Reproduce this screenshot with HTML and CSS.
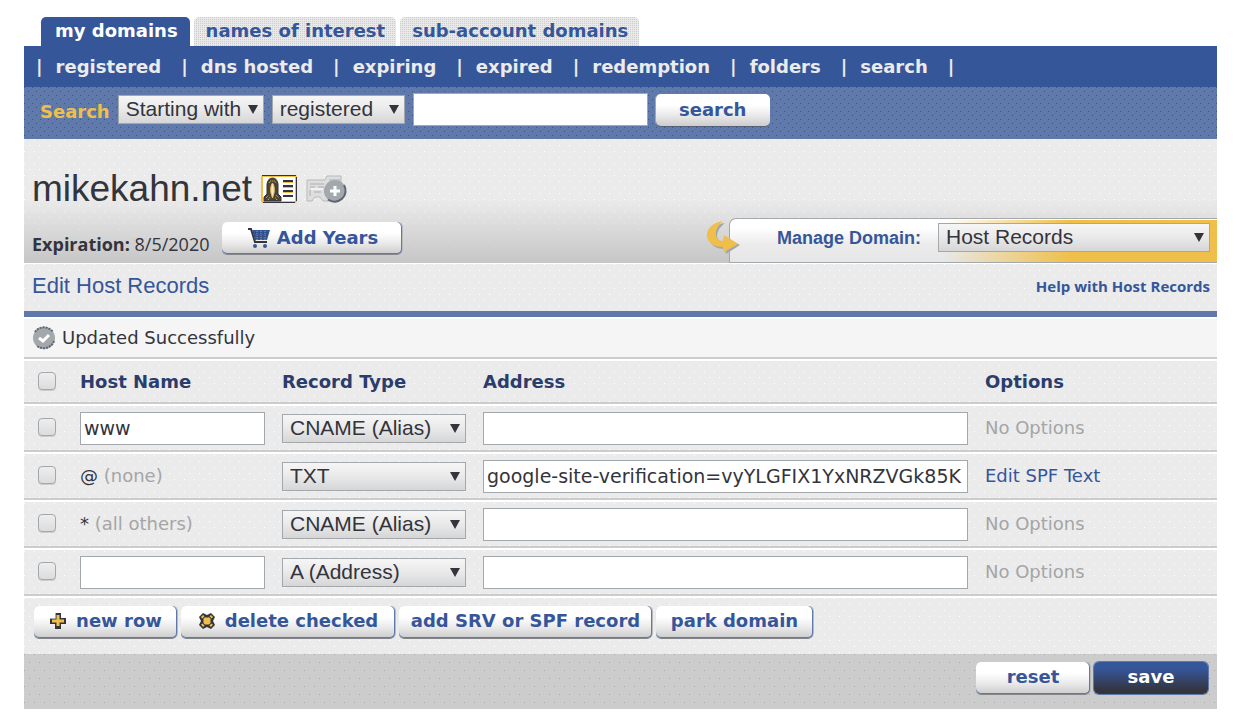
FILE: index.html
```html
<!DOCTYPE html>
<html lang="en">
<head>
<meta charset="utf-8">
<title>mikekahn.net - Edit Host Records</title>
<link rel="stylesheet" href="styles.css">
</head>
<body>
<div class="page">
  <nav class="tabs">
    <a class="tab active" href="#">my domains</a>
    <a class="tab" href="#">names of interest</a>
    <a class="tab" href="#">sub-account domains</a>
  </nav>
  <nav class="subnav">
    <span>|</span><a href="#">registered</a>
    <span>|</span><a href="#">dns hosted</a>
    <span>|</span><a href="#">expiring</a>
    <span>|</span><a href="#">expired</a>
    <span>|</span><a href="#">redemption</a>
    <span>|</span><a href="#">folders</a>
    <span>|</span><a href="#">search</a>
    <span>|</span>
  </nav>
  <form class="search">
    <label class="search-label" for="q">Search</label>
    <select class="select match" aria-label="Match"><option>Starting with</option></select>
    <select class="select scope" aria-label="Scope"><option>registered</option></select>
    <input class="field query" id="q" type="text">
    <button class="btn flat" type="button">search</button>
  </form>

  <header class="domain">
    <div class="title">
      <h1>mikekahn.net</h1>
      <svg class="card" width="36" height="28" viewBox="0 0 36 28">
        <rect x="1" y="1" width="34" height="26" rx="1" fill="#fff" stroke="#f0bf4a" stroke-width="2"/>
        <path d="M1 .5H35M2 27.5H34M35.500 2V26" stroke="#33343c" fill="none"/>
        <path d="M3 26V22L6 19V9Q7 3 11.500 3T17 9V19L20 22V26Z" fill="#4b4230" stroke="#33343c"/>
        <path d="M11.500 8C9.500 10 9.500 16 10 18L11.500 23L13 18C13.500 16 13.500 10 11.500 8Z" fill="#f4e7c5" stroke="#f0bf4a"/>
        <path d="M5 23L8 20M15 20L18 23M7 25L9 22M16 25L14 22M8 8L9 6H14L15 8" stroke="#f0bf4a" fill="none" stroke-dasharray="1 1"/>
        <path d="M22 6H32M22 11H32M22 16H32M22 21H32" stroke="#33343c" stroke-width="2"/>
        <path d="M22 7.500H32M22 12.500H32M22 17.500H32" stroke="#f0bf4a"/>
      </svg>
      <svg class="note" width="42" height="28" viewBox="0 0 42 28">
        <path d="M1 5H19L21 1H35V12H23V26H17L14 22H9L6 26H1Z" fill="#dedede" stroke="#b7b9bb"/>
        <path d="M4 9H18M4 12H9M12 12H18M4 15V21M8 17H15M23 5H34" stroke="#c4c6c8" stroke-width="2"/>
        <path d="M5 14H17" stroke="#f2f2f2" stroke-width="2"/>
        <circle cx="29" cy="16" r="11" fill="#a3a8ad"/>
        <path d="M38 10A11 11 0 0 1 22 24.500" fill="none" stroke="#5e6472" stroke-width="2"/>
        <path d="M29 11V21M24 16H34" stroke="#fff" stroke-width="3"/>
      </svg>
    </div>
    <div class="domain-bar">
      <p class="expiry"><b>Expiration:</b> 8/5/2020</p>
      <button class="btn years" type="button">
        <svg width="24" height="22" viewBox="0 0 24 22">
          <path d="M1 2H4L8 15H20" fill="none" stroke="#33343c" stroke-width="2"/>
          <path d="M5 3H23L20 13H8Z" fill="#36569a"/>
          <path d="M6 6H22M7 9H21" stroke="#33343c" stroke-dasharray="1 1"/>
          <path d="M10 4V13M14 4V13M18 4V13" stroke="#8b9cc2" stroke-dasharray="1 1"/>
          <circle cx="8" cy="19" r="2" fill="#36569a"/><circle cx="18" cy="19" r="2" fill="#36569a"/>
        </svg>Add Years</button>
      <div class="manage">
        <svg class="hook" width="34" height="36" viewBox="0 0 34 36">
          <path d="M19 4C7 5 2 13 3 20C5 27 11 30 19 30L20 35L34 26L20 18L19 23C9 23 8 13 19 4Z" fill="#a3a8ad"/>
          <path d="M17 2C5 4 0 11 1 18C3 25 9 28 17 28L18 33L32 25L18 16L17 22C8 22 7 10 17 2Z" fill="#f0bf4a"/>
        </svg>
        <label for="manage">Manage Domain:</label>
        <select class="select" id="manage"><option>Host Records</option></select>
      </div>
    </div>
  </header>

  <div class="section">
    <h2>Edit Host Records</h2>
    <a href="#">Help with Host Records</a>
  </div>
  <p class="message">
    <svg width="24" height="24" viewBox="0 0 24 24">
      <circle cx="12" cy="12" r="11" fill="#a3a8ad"/>
      <path d="M3 6A11 11 0 0 1 21 6M22 15A11 11 0 0 1 5 20" fill="none" stroke="#5e6472" stroke-width="2" stroke-dasharray="2 1"/>
      <path d="M7 12L11 15L17 9" fill="none" stroke="#fff" stroke-width="3"/>
    </svg>Updated Successfully</p>

  <form>
    <table class="records">
      <colgroup><col class="c-check"><col class="c-host"><col class="c-type"><col><col class="c-options"></colgroup>
      <thead>
        <tr><th><input type="checkbox" aria-label="Check all"></th><th>Host Name</th><th>Record Type</th><th>Address</th><th>Options</th></tr>
      </thead>
      <tbody>
        <tr>
          <td><input type="checkbox" aria-label="Check www"></td>
          <td><input class="field" type="text" value="www" aria-label="Host name"></td>
          <td><select class="select" aria-label="Record type"><option>CNAME (Alias)</option></select></td>
          <td><input class="field" type="text" aria-label="Address"></td>
          <td class="muted">No Options</td>
        </tr>
        <tr>
          <td><input type="checkbox" aria-label="Check @"></td>
          <td>@ <span class="muted">(none)</span></td>
          <td><select class="select" aria-label="Record type"><option>TXT</option></select></td>
          <td><input class="field" type="text" value="google-site-verification=vyYLGFIX1YxNRZVGk85K" aria-label="Address"></td>
          <td><a href="#">Edit SPF Text</a></td>
        </tr>
        <tr>
          <td><input type="checkbox" aria-label="Check *"></td>
          <td>* <span class="muted">(all others)</span></td>
          <td><select class="select" aria-label="Record type"><option>CNAME (Alias)</option></select></td>
          <td><input class="field" type="text" aria-label="Address"></td>
          <td class="muted">No Options</td>
        </tr>
        <tr>
          <td><input type="checkbox" aria-label="Check new row"></td>
          <td><input class="field" type="text" aria-label="Host name"></td>
          <td><select class="select" aria-label="Record type"><option>A (Address)</option></select></td>
          <td><input class="field" type="text" aria-label="Address"></td>
          <td class="muted">No Options</td>
        </tr>
      </tbody>
    </table>
    <div class="actions">
      <button class="btn new" type="button">
        <svg width="18" height="18" viewBox="0 0 18 18"><path d="M6 1H12V6H17V12H12V17H6V12H1V6H6Z" fill="#33343c"/><path d="M9 3V14M3 9H15" stroke="#f0bf4a" stroke-width="3"/><path d="M6.500 1V6.500H1" fill="none" stroke="#a3a8ad"/></svg>new row</button>
      <button class="btn delete" type="button">
        <svg width="18" height="18" viewBox="0 0 18 18"><path d="M5 1L9 3L13 1L17 5L15 9L17 13L13 17L9 15L5 17L1 13L3 9L1 5Z" fill="#33343c"/><path d="M4 4L14 14M14 4L4 14" stroke="#f0bf4a" stroke-width="3" stroke-dasharray="2 1"/><path d="M9 5L13 9L9 13L5 9Z" fill="#f0bf4a"/></svg>delete checked</button>
      <button class="btn add" type="button">add SRV or SPF record</button>
      <button class="btn park" type="button">park domain</button>
    </div>
    <div class="footer">
      <button class="btn" type="reset">reset</button>
      <button class="btn save" type="button">save</button>
    </div>
  </form>
</div>
</body>
</html>
```
FILE: styles.css
```css
* { box-sizing: border-box; }
:root {
  --blue: #36569a;
  --mid: #6079ab;
  --ink: #33343c;
  --gold: #f0bf4a;
  --grey: #ebebeb;
  --line: #cccccc;
  --sans: "DejaVu Sans", Verdana, sans-serif;
  --arial: "Liberation Sans", Arial, sans-serif;
  --open: "Open Sans", "Noto Sans", sans-serif;
  --dots: conic-gradient(from 270deg at 1px 1px, #fff 90deg, transparent 0) 0 0 / 10px 12px,
          conic-gradient(from 270deg at 1px 1px, #fff 90deg, transparent 0) 5px 6px / 10px 12px;
}
body { margin: 0; background: #fff; color: var(--ink); font: 18px/24px var(--sans); }
h1, h2, p { margin: 0; font-weight: normal; }
a { color: var(--blue); text-decoration: none; }
.page { margin: 17px 24px 7px; }

.tabs { display: flex; gap: 4px; padding-left: 17px; height: 29px; font-weight: bold; }
.tab {
  padding: 2px 11px 0 12px;
  border-radius: 5px 5px 0 0;
  background: conic-gradient(from 270deg at 1px 1px, #ccc 90deg, #e9e9e9 0) 0 0 / 2px 2px;
}
.tab.active { padding: 2px 12px 0 14px; background: var(--blue); color: #fff; }

.subnav {
  display: flex; align-items: center; height: 41px; padding-left: 12px;
  background: var(--blue); color: var(--grey); font-weight: bold;
}
.subnav a { color: inherit; margin: 0 20px 0 13px; }

.search {
  display: flex; align-items: flex-start; gap: 8px; height: 52px; padding: 6px 16px 0;
  background: conic-gradient(from 270deg at 1px 1px, var(--blue) 90deg, transparent 0) 0 0 / 8px 8px,
              conic-gradient(from 270deg at 1px 1px, var(--blue) 90deg, transparent 0) 4px 4px / 8px 8px, var(--mid);
}
.search-label { padding-top: 7px; color: var(--gold); font-weight: bold; }
.search .select { margin-top: 2px; }
.match { width: 146px; }
.scope { width: 133px; }
.query { width: 235px; }
.search .btn { min-width: 114px; margin-top: 1px; padding-bottom: 0; }

.select {
  appearance: none; height: 29px; padding: 0 7px 2px;
  border: 1px solid #a3a8ad; border-radius: 0; color: var(--ink);
  font: 21px/26px var(--arial);
  background: url("data:image/svg+xml,%3Csvg xmlns='http://www.w3.org/2000/svg' width='10' height='9'%3E%3Cpath d='M0 0H10L5 9Z' fill='%2333343c'/%3E%3C/svg%3E") right 5px center no-repeat,
              linear-gradient(#f6f6f6, #e9e9e9 50%, #d6d6d6);
}
.field {
  height: 33px; padding: 0 3px; border: 1px solid #a3a8ad; border-radius: 0;
  background: #fff; color: var(--ink); font: 19px/24px var(--sans);
}
.btn {
  display: inline-flex; align-items: center; justify-content: center;
  height: 32px; padding: 0 0 2px; border: 0; border-radius: 5px;
  background: linear-gradient(#fff 35%, #ebebeb 65%, #ccc);
  box-shadow: inset 0 -1px var(--mid), inset -1px 0 var(--mid), 0 1px #85878c, 1px 0 #b7b9bb;
  color: var(--blue); font: bold 18px/24px var(--sans); white-space: nowrap;
}
.btn svg { margin-right: 9px; }
.btn.flat { box-shadow: 0 1px #55617d, -1px 0 #a3a8ad; }

.domain {
  padding-top: 26px; border-bottom: 1px solid #fff;
  background: linear-gradient(transparent 48%, #c6c6c6), var(--dots), var(--grey);
}
.title { display: flex; align-items: center; padding-left: 8px; height: 48px; }
h1 { font: 37px/48px var(--arial); }
.card { margin-left: 9px; }
.note { margin-left: 9px; }
.domain-bar { display: flex; margin-top: 5px; height: 45px; }
.expiry { padding: 14px 13px 0 8px; font: 18px/24px var(--open); }
.years { margin-top: 4px; width: 180px; padding: 0; }
.years svg { margin-right: 6px; }
.manage {
  position: relative; display: flex; align-items: center; justify-content: flex-end;
  width: 488px; margin-left: auto; padding: 0 7px 6px 0;
  border: 1px solid #a3a8ad; border-width: 1px 0 1px 1px; border-radius: 7px 0 0 0;
  box-shadow: inset 0 1px #fff;
  background: linear-gradient(90deg, transparent 44%, var(--gold) 70%), linear-gradient(#fff 20%, #ebebeb 60%, #e6e6e6);
}
.manage label { margin-right: 17px; color: var(--blue); font: bold 18px/24px var(--arial); }
.manage .select { width: 272px; }
.hook { position: absolute; left: -24px; top: 0; }

.section {
  display: flex; justify-content: space-between; align-items: center;
  height: 53px; padding: 0 7px 3px 8px; border-bottom: 6px solid var(--mid);
  background: var(--dots), var(--grey);
}
h2 { color: var(--blue); font: 22px/32px var(--arial); }
.section a { font: bold 15px/24px var(--open); }
.message {
  display: flex; align-items: center; gap: 6px; height: 42px; padding-left: 8px;
  border-top: 2px solid #fff; border-bottom: 2px solid var(--line); background: #f5f5f5;
}

.records { width: 100%; border-spacing: 0; table-layout: fixed; background: var(--dots), var(--grey); }
.c-check { width: 56px; }
.c-host { width: 202px; }
.c-type { width: 201px; }
.c-options { width: 232px; }
.records tr { height: 48px; }
.records thead tr { height: 45px; }
.records th, .records td {
  padding: 0 17px 0 0; border-top: 2px solid #fff; border-bottom: 2px solid var(--line);
  text-align: left; vertical-align: middle;
}
.records th { color: #2b3d6b; }
.records th:first-child, .records td:first-child { padding: 0 0 2px 14px; }
.records .field, .records .select { display: block; width: 100%; }
.muted { color: #a5a5a5; }
input[type="checkbox"] {
  appearance: none; display: block; width: 18px; height: 18px; margin: 0;
  border: 1px solid #a3a8ad; border-radius: 4px;
  background: linear-gradient(#eee, #dcdcdc); box-shadow: 0 1px #ccc;
}

.actions {
  display: flex; gap: 4px; height: 58px; padding: 8px 10px 0; border-top: 2px solid #fff;
  background: var(--dots), var(--grey);
}
.new { width: 143px; }
.delete { width: 214px; }
.add { width: 253px; }
.park { width: 157px; }
.footer {
  display: flex; justify-content: flex-end; gap: 4px; height: 55px; padding: 8px 9px 0;
  background: conic-gradient(from 270deg at 1px 1px, #a8a8a8 90deg, transparent 0) 0 0 / 10px 16px,
              conic-gradient(from 270deg at 1px 1px, #a8a8a8 90deg, transparent 0) 5px 8px / 10px 16px, #ccc;
}
.footer .btn { width: 114px; }
.footer .save {
  background: linear-gradient(var(--blue) 20%, #33343c 90%); color: #fff;
  box-shadow: 0 0 0 1px var(--mid);
}
```
